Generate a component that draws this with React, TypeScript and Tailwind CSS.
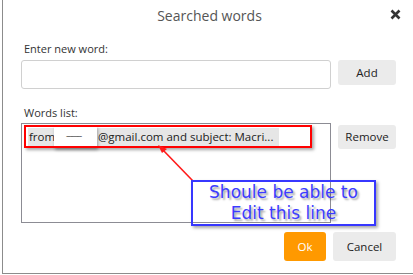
import React from "react";

function CloseIcon() {
  return (
    <svg width="11" height="11" viewBox="0 0 11 11">
      <path d="M1.5 1.5 L9.5 9.5 M9.5 1.5 L1.5 9.5" stroke="#333" strokeWidth="2.6" strokeLinecap="butt" />
    </svg>
  );
}

function Annotations() {
  return (
    <>
      {/* red highlight around the selected row */}
      <div className="absolute left-[24px] top-[125px] h-[23px] w-[288px] border-2 border-[#ff0000] shadow-[2px_2px_3px_rgba(0,0,0,0.35)]" />
      {/* arrow */}
      <svg className="absolute left-0 top-0" width="413" height="275">
        <line x1="193" y1="181" x2="161" y2="148" stroke="#ff1a1a" strokeWidth="1.6" />
        <path d="M158 145 L167 149 L162 153 Z" fill="#ff1a1a" />
      </svg>
      {/* callout */}
      <div className="absolute left-[191px] top-[180px] flex h-[46px] w-[185px] flex-col items-center justify-center border-2 border-[#3737ff] font-['DejaVu_Sans',sans-serif] text-[17px] leading-[21px] text-[#3c3cff] shadow-[2px_2px_3px_rgba(0,0,0,0.35)] [text-shadow:2px_2px_2px_rgba(0,0,0,0.35)]">
        <span>Shoule be able to</span>
        <span>Edit this line</span>
      </div>
    </>
  );
}

export default function App() {
  return (
    <div className="relative h-[275px] w-[413px] overflow-hidden bg-white font-['Open_Sans',sans-serif] text-[#222]">
      <div className="ml-[2px] h-[274px] border-b border-l border-[#8c8c8c] pl-[18px] pr-[17px]">
        <div className="relative flex h-[30px] items-center justify-center pl-[2px]">
          <span className="text-[14px] text-[#555]">Searched words</span>
          <span className="absolute right-[-5px] top-[9px]">
            <CloseIcon />
          </span>
        </div>

        <p className="mt-[11px] pl-[3px] text-[11px] leading-[16px] text-[#333]">Enter new word:</p>
        <div className="mt-[3px] flex gap-[7px]">
          <input className="h-[29px] w-[310px] rounded-[3px] border border-[#d0d0d0] bg-white outline-none" />
          <button className="h-[25px] w-[58px] rounded-[3px] bg-[#ebebeb] text-[11.5px] text-[#222]">Add</button>
        </div>

        <p className="mt-[16px] pl-[3px] text-[11px] leading-[16px] text-[#333]">Words list:</p>
        <div className="mt-[2px] flex gap-[7px]">
          <div className="h-[100px] w-[310px] border border-[#8c8c94] px-[6px] pt-[4px]">
            <div className="flex h-[18px] w-[251px] items-center bg-[#e6e6e6] pl-[1px] text-[11.5px] text-[#222]">
              <span className="w-[25px]">from</span>
              <span className="-my-[2px] flex h-[22px] w-[43px] items-center justify-center pb-[3px] pr-[4px] bg-white text-[9px] leading-none tracking-[-1px] text-[#444] shadow-[1px_2px_3px_rgba(0,0,0,0.3)]">
                --------
              </span>
              <span className="pl-[1px]">@gmail.com and subject: Macri...</span>
            </div>
          </div>
          <button className="mt-[2px] h-[24px] w-[58px] rounded-[3px] bg-[#ebebeb] text-[11.5px] text-[#222]">Remove</button>
        </div>

        <div className="mt-[9px] flex justify-end gap-[7px]">
          <button className="h-[29px] w-[42px] rounded-[3px] bg-[#ff9900] text-[11.5px] text-white">Ok</button>
          <button className="h-[29px] w-[63px] rounded-[3px] bg-[#ebebeb] text-[11.5px] text-[#222]">Cancel</button>
        </div>
      </div>
      <Annotations />
    </div>
  );
}
